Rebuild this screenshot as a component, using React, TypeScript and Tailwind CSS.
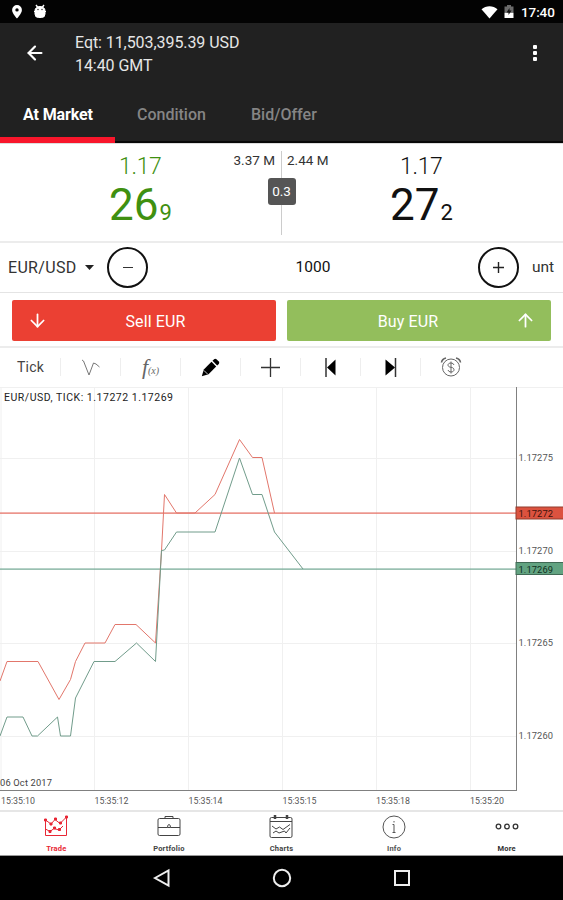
import { ArrowDown, ArrowUp, ArrowLeft } from "lucide-react";

const tabs = [
  { label: "At Market", className: "w-[115px] pl-[23px] text-white border-[#f8162b] font-bold tracking-[-0.120px]" },
  { label: "Condition", className: "w-[113px] pl-[22px] text-[#858585] border-transparent font-medium" },
  { label: "Bid/Offer", className: "w-[113px] pl-[23px] text-[#858585] border-transparent font-medium" },
];

const gridX = [1, 94.5, 188.5, 282.5, 376.5, 470.5];

const prices = [
  { label: "1.17275", y: 71 },
  { label: "1.17270", y: 164 },
  { label: "1.17265", y: 256 },
  { label: "1.17260", y: 349 },
];

const times = [
  { label: "15:35:10", x: 1 },
  { label: "15:35:12", x: 94.5 },
  { label: "15:35:14", x: 188.5 },
  { label: "15:35:15", x: 282.5 },
  { label: "15:35:18", x: 376 },
  { label: "15:35:20", x: 470 },
];

const askLine =
  "0,294 7,274.5 38,274.5 59,312.5 70.5,292.5 75.5,274.5 85,256 105,256 115,237.5 136,237.5 155.5,256 161.5,164 164.5,107.5 176.5,126 195,126 215,107.5 239.5,52.5 252.5,70.5 262,70.5 274.5,126";
const bidLine =
  "0,349 7,330 23,330 32,349 37.5,349 57.5,330 60.5,349 70.5,349 75.5,311 94,274.5 115,274.5 136.5,256 155.5,274.5 161.5,163.5 164.5,163 176.5,145 215,145 239.5,71 252.5,107.5 262,107.5 274.5,145 303,182";

function StatusBar() {
  return (
    <div className="flex h-[23px] items-center bg-[#030303] px-[11px] text-white">
      <svg className="h-[15px] w-[12px]" viewBox="0 0 12 15" fill="#fff">
        <path fillRule="evenodd" d="M6 1a4.900 4.900 0 0 0-4.900 4.900C1.100 9.500 6 14.400 6 14.400s4.900-4.900 4.900-8.500A4.900 4.900 0 0 0 6 1zm0 3.200a1.700 1.700 0 1 1 0 3.400 1.700 1.700 0 0 1 0-3.400z" />
      </svg>
      <svg className="ml-[10px] h-[15px] w-[14px]" viewBox="0 0 14 15">
        <path d="M3 1l1.800 2.400M11 1L9.200 3.400" stroke="#fff" strokeWidth="1.500" />
        <path d="M1 7.500h12M2 6.500a5 4 0 0 1 10 0V10a3.500 3.500 0 0 1-3.500 3.500h-3A3.500 3.500 0 0 1 2 10z" fill="#fff" stroke="#fff" />
        <circle cx="5" cy="5.500" r=".8" fill="#444" />
        <circle cx="9" cy="5.500" r=".8" fill="#444" />
      </svg>
      <div className="flex-1" />
      <svg className="h-[14px] w-[17px]" viewBox="0 0 17 14">
        <path d="M.5 4.200C5 .2 12 .2 16.500 4.200L8.500 13.600z" fill="#fff" />
      </svg>
      <svg className="mr-[7px] ml-[6px] h-[15px] w-[10px]" viewBox="0 0 10 15">
        <path d="M3 1h4v1.500h2.500V8h-9V2.500H3z" fill="#6b6b6b" />
        <path d="M.5 8.500h9V14h-9z" fill="#fff" />
        <path d="M5.500 4L2.500 8.500h2V11l3-4.500h-2z" fill="#111" />
      </svg>
      <span className="-mr-[5px] w-[36px] pt-[2px] text-[13.500px] leading-none font-medium tracking-[-0.100px]">17:40</span>
    </div>
  );
}

function Header() {
  return (
    <header className="flex h-[120px] flex-col border-b-2 border-[#080808] bg-[#212121]">
      <div className="flex h-[61px] items-start">
        <ArrowLeft className="mt-[19px] ml-[24px] h-[22px] w-[22px] text-white" strokeWidth={2.4} />
        <div className="ml-[29px] flex-1 pt-[8px] text-[16px] leading-[23px] tracking-[-0.070px] text-[#e6e6e6]">
          <p>Eqt: 11,503,395.39 USD</p>
          <p>14:40 GMT</p>
        </div>
        <div className="mt-[22px] mr-[26px] flex flex-col gap-[2px]">
          <i className="size-[4px] rounded-[1px] bg-white" />
          <i className="size-[4px] rounded-[1px] bg-white" />
          <i className="size-[4px] rounded-[1px] bg-white" />
        </div>
      </div>
      <nav className="-mb-[2px] flex flex-1">
        {tabs.map(({ label, className }) => (
          <div key={label} className={`flex items-center border-b-[6px] pt-[8px] text-[16px] whitespace-nowrap ${className}`}>
            {label}
          </div>
        ))}
      </nav>
    </header>
  );
}

function Quotes() {
  return (
    <section className="flex h-[100px] border-t border-b-2 border-t-[#ddd] border-b-[#ececec]">
      <div className="flex flex-1 pt-[9px]">
        <div className="w-[172px] pl-[109px] text-[#3f9010]">
          <p className="pl-[10px] text-[23px] leading-[28px] font-light tracking-[-0.300px]">1.17</p>
          <p className="flex items-baseline text-[44px] leading-[49px]">
            26<span className="ml-px text-[22px]">9</span>
          </p>
        </div>
        <p className="-mt-px flex-1 pr-[6px] text-right text-[13.500px] leading-[16px] text-[#333]">3.37 M</p>
      </div>
      <div className="mt-[7px] flex h-[84px] w-px items-center justify-center bg-[#ccc]">
        <span className="mb-[3px] flex h-[27px] w-[28px] shrink-0 items-center justify-center rounded-[3px] bg-[#555] text-[13.500px] text-white">
          0.3
        </span>
      </div>
      <div className="flex flex-1 pt-[9px]">
        <p className="-mt-px w-[108px] pl-[5px] text-[13.500px] leading-[16px] text-[#333]">2.44 M</p>
        <div className="text-[#111]">
          <p className="pl-[10px] text-[23px] leading-[28px] font-light tracking-[-0.300px]">1.17</p>
          <p className="flex items-baseline text-[44px] leading-[49px]">
            27<span className="ml-px text-[22px]">2</span>
          </p>
        </div>
      </div>
    </section>
  );
}

function AmountRow() {
  return (
    <section className="flex h-[50px] items-center border-b border-[#e4e4e4] text-[15px] text-[#333]">
      <span className="w-[86px] pt-px pl-[8px] text-[16px] tracking-[0.320px]">EUR/USD</span>
      <svg className="-ml-px h-[5px] w-[9px]" viewBox="0 0 9 5">
        <path d="M0 0h9L4.500 5z" fill="#222" />
      </svg>
      <span className="ml-[13px] flex size-[41px] items-center justify-center rounded-full border-2 border-[#111]">
        <i className="h-[1.500px] w-[10px] bg-[#333]" />
      </span>
      <span className="flex-1 pt-px text-center text-[15.500px] text-[#111]">1000</span>
      <span className="mr-px flex size-[41px] items-center justify-center rounded-full border-2 border-[#111]">
        <svg className="size-[11px]" viewBox="0 0 11 11">
          <path d="M5.500 0v11M0 5.500h11" stroke="#222" strokeWidth="1.400" />
        </svg>
      </span>
      <span className="w-[43px] pt-px pl-[12px] text-[15.500px]">unt</span>
    </section>
  );
}

function TradeButtons() {
  return (
    <section className="flex h-[55px] gap-[11px] border-b-2 border-[#ececec] px-[12px] pt-[7px]">
      <button className="flex h-[41px] flex-1 items-center rounded-[2px] bg-[#eb4033] text-[16px] text-white">
        <ArrowDown className="ml-[15px] h-[21px] w-[21px]" />
        <span className="flex-1 pt-[3px] pr-[13px] text-center tracking-[0.120px]">Sell EUR</span>
      </button>
      <button className="flex h-[41px] flex-1 items-center rounded-[2px] bg-[#93be5c] text-[16px] text-white">
        <span className="flex-1 pt-[3px] pl-[14px] text-center tracking-[0.150px]">Buy EUR</span>
        <ArrowUp className="mr-[15px] h-[21px] w-[21px]" />
      </button>
    </section>
  );
}

function Toolbar() {
  return (
    <section className="flex h-[39px] items-center divide-x divide-[#eee] pb-px text-[#444]">
      <span className="w-[61px] pl-[17px] text-[14px] leading-[18px] tracking-[0.200px]">Tick</span>
      <span className="flex h-[18px] w-[60px] items-center justify-center">
        <svg className="size-[20px]" viewBox="0 0 20 20" fill="none" stroke="#777">
          <path d="M1 3l1.500 1 5.500 14 4.500-12 2.500 1 3.500 3" />
        </svg>
      </span>
      <span className="flex h-[18px] w-[60px] items-center justify-center font-['Liberation_Serif',serif] text-[22px] leading-[18px] text-[#666] italic">
        f<span className="mt-[8px] text-[10px]">(x)</span>
      </span>
      <span className="flex h-[18px] w-[60px] items-center justify-center">
        <svg className="size-[19px]" viewBox="0 0 19 19">
          <path d="M.8 18.200l2-6.700L10.500 3.800l4.700 4.700-7.700 7.700z" fill="#000" />
          <path d="M11.500 2.800l1.600-1.600q1.200-1 2.400 0l2.300 2.300q1 1.200 0 2.400l-1.600 1.600z" fill="#000" />
          <path d="M3 12.500l3.500 3.500" stroke="#fff" strokeWidth=".8" />
        </svg>
      </span>
      <span className="flex h-[18px] w-[60px] items-center justify-center">
        <svg className="size-[19px]" viewBox="0 0 19 19" stroke="#333" strokeWidth="1.300">
          <path d="M9.500 0v19M0 9.500h19" />
        </svg>
      </span>
      <span className="flex h-[18px] w-[60px] items-center justify-center">
        <svg className="h-[19px] w-[12px]" viewBox="0 0 12 19">
          <path d="M1 0v19" stroke="#333" strokeWidth="1.500" />
          <path d="M10.500 1.500v16L2 9.500z" fill="#000" />
        </svg>
      </span>
      <span className="flex h-[18px] w-[60px] items-center justify-center">
        <svg className="h-[19px] w-[12px]" viewBox="0 0 12 19">
          <path d="M10.500 0v19" stroke="#333" strokeWidth="1.500" />
          <path d="M.5 1.500v16l9.500-8z" fill="#000" />
        </svg>
      </span>
      <span className="flex h-[18px] w-[60px] items-center justify-center">
        <svg className="size-[22px]" viewBox="0 0 22 22" fill="none" stroke="#666">
          <circle cx="11" cy="11.500" r="8.500" />
          <path d="M1.500 6.500Q2 3 6 2M20.500 6.500Q20 3 16 2" strokeWidth="1.600" />
          <path d="M14 9q-.5-2-3-2c-4 0-4 4 0 4.300s4 4.700 0 4.700q-2.500 0-3-2M11 5.500v12" />
        </svg>
      </span>
    </section>
  );
}

function Chart() {
  return (
    <svg className="block h-[423px] w-full" viewBox="0 0 563 423" fontSize="9.300">
      <g stroke="#f0f0f0">
        <path d="M0 .5h563" />
        {gridX.map((x) => (
          <path key={x} d={`M${x} 0v403`} />
        ))}
        {prices.map(({ y }) => (
          <path key={y} d={`M0 ${y}.5h516`} />
        ))}
      </g>
      <path d="M516.500 0v403.500M0 403.500h517" stroke="#808080" fill="none" />
      <rect x="0" y="125.500" width="516" height="1.200" fill="#e4695c" />
      <rect x="0" y="181.500" width="516" height="1.200" fill="#6fa591" />
      <polyline points={askLine} fill="none" stroke="#e2766b" />
      <polyline points={bidLine} fill="none" stroke="#719c8b" />
      <text x="4" y="13.500" fontSize="10.500" fill="#222" textLength="169">EUR/USD, TICK: 1.17272 1.17269</text>
      <text x="0" y="398.500" fill="#444" textLength="52">06 Oct 2017</text>
      <g fill="#555">
        {prices.map(({ label, y }) => (
          <text key={label} x="518.500" y={y + 3} textLength="34.500">{label}</text>
        ))}
        {times.map(({ label, x }) => (
          <text key={label} x={x} y="416.500" fontSize="8.800" textLength="34">{label}</text>
        ))}
      </g>
      <rect x="516" y="120" width="50" height="12" fill="#dc523f" stroke="#913c2e" />
      <rect x="516" y="175.500" width="50" height="12" fill="#62a381" stroke="#416a55" />
      <text x="518.500" y="130" fill="#40130c" textLength="34.500">1.17272</text>
      <text x="518.500" y="185.500" fill="#11301f" textLength="34.500">1.17269</text>
    </svg>
  );
}

const navItems = [
  {
    label: "Trade",
    className: "text-[#e82735]",
    icon: (
      <>
        <path d="M1.500 5v15.500h21V3M1.500 5l5.500 4 4-4.500 5 4L22.500 2M1.500 14l4.500 2.500 4-3 5 1.500 4-4" />
        <path d="M.5 4h2v2h-2zM6 8h2v2H6zM10.500 3h2v2h-2zM15.500 7h2v2h-2zM21.500 1h2v2h-2zM5 15.500h2v2H5zM9.500 12h2v2h-2zM14.500 13.500h2v2h-2z" fill="currentColor" />
      </>
    ),
  },
  {
    label: "Portfolio",
    className: "text-[#444]",
    icon: <path d="M2.500 3.500h19q1.500 0 1.500 1.500v14q0 1.500-1.500 1.500h-19Q1 20.500 1 19V5q0-1.500 1.500-1.500zM8 3.500v-2h8v2M1 12.500h9.500M13.500 12.500H23M10.500 12.500q0-3 1.500-3t1.500 3z" />,
  },
  {
    label: "Charts",
    className: "text-[#444]",
    icon: (
      <>
        <path d="M2.500 2.500h19q1.500 0 1.500 1.500v17q0 1.500-1.500 1.500h-19Q1 22.500 1 21V4q0-1.500 1.500-1.500zM1 6.500h22M3 11l4 3 3.500-2 3.500 2.500 7-5M4 18l3-2 3 2 5.500-2 1.500 2 4-5" />
        <path d="M6 0v4M18 0v4" strokeWidth="2.500" />
      </>
    ),
  },
  {
    label: "Info",
    className: "text-[#555]",
    icon: (
      <>
        <circle cx="12" cy="12" r="11" />
        <path d="M12 9.500v8M10.500 17.500h3M10.500 9.500H12M12 6v1.500" />
      </>
    ),
  },
  {
    label: "More",
    className: "text-[#333]",
    icon: (
      <>
        <circle cx="3.500" cy="11.500" r="2.300" strokeWidth="1.300" />
        <circle cx="12" cy="11.500" r="2.300" strokeWidth="1.300" />
        <circle cx="20.500" cy="11.500" r="2.300" strokeWidth="1.300" />
      </>
    ),
  },
];

function BottomNav() {
  return (
    <nav className="grid h-[46px] grid-cols-5 border-t-2 border-b border-t-[#e6e6e6] border-b-[#999] bg-white">
      {navItems.map(({ label, className, icon }) => (
        <div key={label} className={`flex flex-col items-center pt-[3px] ${className}`}>
          <svg className="size-[24px]" viewBox="0 0 24 24" fill="none" stroke="currentColor" strokeWidth="1">
            {icon}
          </svg>
          <span className="mt-[5px] text-[7.500px] leading-[9px] font-bold tracking-[0.200px]">{label}</span>
        </div>
      ))}
    </nav>
  );
}

function SystemNav() {
  return (
    <div className="flex h-[44px] items-center justify-center gap-[96px] bg-black">
      <svg className="size-[24px]" viewBox="0 0 24 24" fill="none" stroke="#eee" strokeWidth="2">
        <path d="M5 12L18.500 4.500v15z" />
      </svg>
      <svg className="size-[24px]" viewBox="0 0 24 24" fill="none" stroke="#eee" strokeWidth="2">
        <circle cx="12" cy="12" r="8.200" />
      </svg>
      <svg className="size-[24px]" viewBox="0 0 24 24" fill="none" stroke="#eee" strokeWidth="2">
        <path d="M5 5h14v14H5z" />
      </svg>
    </div>
  );
}

export default function App() {
  return (
    <main className="flex h-[900px] w-[563px] flex-col overflow-hidden bg-white font-['Roboto',sans-serif]">
      <StatusBar />
      <Header />
      <Quotes />
      <AmountRow />
      <TradeButtons />
      <Toolbar />
      <Chart />
      <BottomNav />
      <SystemNav />
    </main>
  );
}
